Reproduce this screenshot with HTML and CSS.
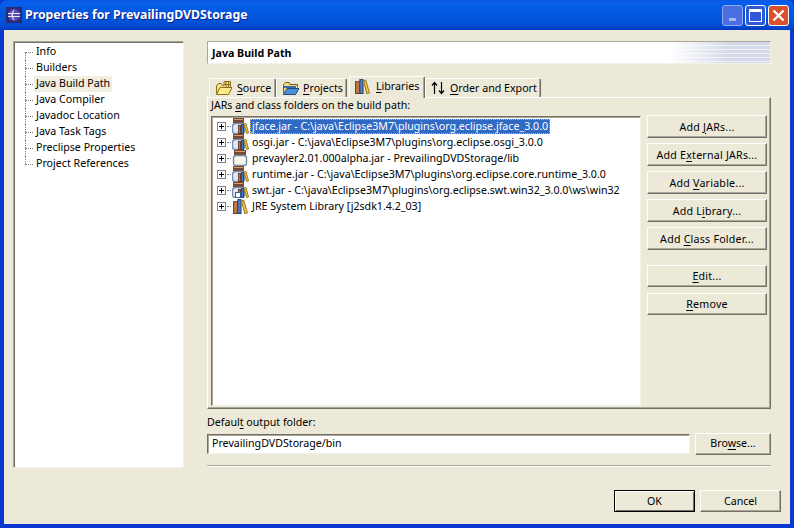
FILE: index.html
```html
<!DOCTYPE html>
<html lang="en">
<head>
<meta charset="utf-8">
<title>Properties for PrevailingDVDStorage</title>
<link rel="stylesheet" href="styles.css">
</head>
<body>
<svg class="defs" width="0" height="0" aria-hidden="true">
  <defs>
    <g id="books">
      <rect x="0.5" y="3.5" width="4" height="11" fill="#c07840" stroke="#6a4028"/>
      <rect x="4.5" y="1.5" width="3" height="13" fill="#5080c0" stroke="#2a4478"/>
      <path d="M8 2.5 L10 2 L13.5 14 L11 14.5 Z" fill="#f4c848" stroke="#a07c20" stroke-width="1"/>
    </g>
    <g id="jar">
      <rect x="2.5" y="0.5" width="11" height="2" fill="#d89a70" stroke="#7a4a30"/>
      <rect x="2.5" y="3.5" width="11" height="1" fill="#d89a70" stroke="#7a4a30"/>
      <rect x="1.5" y="5.5" width="13" height="10" rx="2.5" fill="#f6f6e4" stroke="#6f8db5" stroke-width="1.4"/>
    </g>
    <g id="jarbooks">
      <rect x="1.5" y="0.5" width="10" height="2" fill="#d89a70" stroke="#7a4a30"/>
      <rect x="1.5" y="3.5" width="10" height="1" fill="#d89a70" stroke="#7a4a30"/>
      <rect x="0.5" y="5.5" width="12" height="10" rx="2.5" fill="#dfe9f6" stroke="#6f8db5" stroke-width="1.4"/>
      <rect x="6.5" y="7.5" width="2" height="8" fill="#c07840" stroke="#6a4028"/>
      <rect x="9.5" y="6.5" width="2" height="9" fill="#5080c0" stroke="#2a4478"/>
      <path d="M12 6 L14 5.5 L16.5 15 L14.5 15.5 Z" fill="#f4c848" stroke="#a07c20"/>
    </g>
    <g id="folder-src">
      <path d="M1.5 13.5 L1.5 5.5 L3.5 3.5 L6.5 3.5 L7.5 5.5 L9 5.5 L9 1.5 L15.5 1.5 L15.5 7.5" fill="#f6dc80" stroke="#8a7020"/>
      <path d="M11 1.5 V7 M13.5 1.5 V7 M9 4.5 H15.5" stroke="#8a7020" fill="none"/>
      <path d="M1.5 14.5 L5 7.5 L17 7.5 L13.5 14.5 Z" fill="#fde88a" stroke="#8a7020"/>
    </g>
    <g id="folder-prj">
      <path d="M1.5 13.5 L1.5 4.5 L3.5 2.5 L7 2.5 L8 4.5 L15.5 4.5 L15.5 7.5" fill="#f6dc80" stroke="#6a6020"/>
      <path d="M2 7 H14" stroke="#3a6ab0" stroke-width="2"/>
      <path d="M1.5 14.5 L5 8.5 L17 8.5 L13.5 14.5 Z" fill="#4a90d8" stroke="#1f4a80"/>
    </g>
    <g id="plus">
      <rect x="0.5" y="0.5" width="8" height="8" fill="#fff" stroke="#808080"/>
      <path d="M2 4.5 H7 M4.5 2 V7" stroke="#000" fill="none"/>
    </g>
  </defs>
</svg>
<div class="window">
  <header class="titlebar">
    <svg class="appicon" width="16" height="16" viewBox="0 0 16 16">
      <rect width="16" height="16" fill="#2c2a78"/>
      <circle cx="8" cy="8" r="6" fill="#5a4ab0"/>
      <path d="M2 6.5 H14 M2 9.5 H14" stroke="#e8e8ff" stroke-width="1"/>
      <path d="M9 2.5 A6 6 0 0 0 9 13.5 A8 8 0 0 1 9 2.5 Z" fill="#e8e8ff"/>
    </svg>
    <span class="title">Properties for PrevailingDVDStorage</span>
    <div class="winbtns">
      <span class="winbtn winbtn-min"><i class="min-glyph"></i></span>
      <span class="winbtn winbtn-max"><i class="max-glyph"></i></span>
      <span class="winbtn winbtn-close">
        <svg width="13" height="13" viewBox="0 0 13 13"><path d="M1.5 1.5 L11.5 11.5 M11.5 1.5 L1.5 11.5" stroke="#fff" stroke-width="2.4"/></svg>
      </span>
    </div>
  </header>
  <div class="client">
    <div class="main">
      <nav class="nav">
        <ul class="navlist">
          <li class="navitem"><span>Info</span></li>
          <li class="navitem"><span>Builders</span></li>
          <li class="navitem navitem-sel"><span>Java Build Path</span></li>
          <li class="navitem"><span>Java Compiler</span></li>
          <li class="navitem"><span>Javadoc Location</span></li>
          <li class="navitem"><span>Java Task Tags</span></li>
          <li class="navitem"><span>Preclipse Properties</span></li>
          <li class="navitem"><span>Project References</span></li>
        </ul>
      </nav>
      <section class="page">
        <div class="pagehead">Java Build Path</div>
        <div class="tabs">
          <div class="tab tab-source"><svg class="tabicon" width="17" height="16" viewBox="0 0 17 16"><use href="#folder-src"/></svg><span><u>S</u>ource</span></div>
          <div class="tab tab-projects"><svg class="tabicon" width="17" height="16" viewBox="0 0 17 16"><use href="#folder-prj"/></svg><span><u>P</u>rojects</span></div>
          <div class="tab tab-active"><svg class="tabicon" width="15" height="16" viewBox="0 0 14 15"><use href="#books"/></svg><span><u>L</u>ibraries</span></div>
          <div class="tab tab-order"><svg class="tabicon" width="14" height="14" viewBox="0 0 14 14"><path d="M3.5 13 V2 M1 4.5 L3.5 1.5 L6 4.5 M10.5 1 V12 M8 9.5 L10.5 12.5 L13 9.5" stroke="#000" stroke-width="1.2" fill="none"/></svg><span><u>O</u>rder and Export</span></div>
        </div>
        <div class="panel">
          <div class="panellabel">JARs <u>a</u>nd class folders on the build path:</div>
          <div class="panelbody">
            <div class="list">
              <div class="row"><svg class="plus" width="9" height="9"><use href="#plus"/></svg><i class="dash"></i><svg class="ricon" width="17" height="16" viewBox="0 0 17 16"><use href="#jarbooks"/></svg><span class="rowtext rowtext-sel">jface.jar - C:\java\Eclipse3M7\plugins\org.eclipse.jface_3.0.0</span></div>
              <div class="row"><svg class="plus" width="9" height="9"><use href="#plus"/></svg><i class="dash"></i><svg class="ricon" width="17" height="16" viewBox="0 0 17 16"><use href="#jarbooks"/></svg><span class="rowtext">osgi.jar - C:\java\Eclipse3M7\plugins\org.eclipse.osgi_3.0.0</span></div>
              <div class="row"><svg class="plus" width="9" height="9"><use href="#plus"/></svg><i class="dash"></i><svg class="ricon" width="17" height="16" viewBox="0 0 17 16"><use href="#jar"/></svg><span class="rowtext">prevayler2.01.000alpha.jar - PrevailingDVDStorage/lib</span></div>
              <div class="row"><svg class="plus" width="9" height="9"><use href="#plus"/></svg><i class="dash"></i><svg class="ricon" width="17" height="16" viewBox="0 0 17 16"><use href="#jarbooks"/></svg><span class="rowtext">runtime.jar - C:\java\Eclipse3M7\plugins\org.eclipse.core.runtime_3.0.0</span></div>
              <div class="row"><svg class="plus" width="9" height="9"><use href="#plus"/></svg><i class="dash"></i><svg class="ricon" width="17" height="16" viewBox="0 0 17 16"><use href="#jarbooks"/><rect x="3.5" y="10.5" width="5" height="5" fill="#fff" stroke="#3a5a90"/></svg><span class="rowtext">swt.jar - C:\java\Eclipse3M7\plugins\org.eclipse.swt.win32_3.0.0\ws\win32</span></div>
              <div class="row"><svg class="plus" width="9" height="9"><use href="#plus"/></svg><i class="dash"></i><svg class="ricon" width="17" height="16" viewBox="0 0 14 15"><use href="#books"/></svg><span class="rowtext">JRE System Library [j2sdk1.4.2_03]</span></div>
            </div>
            <div class="btncol">
              <button class="btn btn-side">Add <u>J</u>ARs...</button>
              <button class="btn btn-side">Add E<u>x</u>ternal JARs...</button>
              <button class="btn btn-side">Add <u>V</u>ariable...</button>
              <button class="btn btn-side">Add L<u>i</u>brary...</button>
              <button class="btn btn-side">Add <u>C</u>lass Folder...</button>
              <button class="btn btn-side btn-short btn-gap"><u>E</u>dit...</button>
              <button class="btn btn-side btn-short btn-next"><u>R</u>emove</button>
            </div>
          </div>
        </div>
        <label class="outlabel">Defaul<u>t</u> output folder:</label>
        <div class="outrow">
          <div class="field">PrevailingDVDStorage/bin</div>
          <button class="btn btn-browse">Bro<u>w</u>se...</button>
        </div>
        <div class="sep"></div>
      </section>
    </div>
    <footer class="actions">
      <button class="btn btn-action btn-default">OK</button>
      <button class="btn btn-action">Cancel</button>
    </footer>
  </div>
</div>
</body>
</html>
```

FILE: styles.css
```css
* { box-sizing: border-box; }
html, body { margin: 0; padding: 0; }
body { width: 794px; height: 528px; overflow: hidden; font: 10.65px/13px "Noto Sans", "Liberation Sans", sans-serif; color: #000; }
.defs { position: absolute; }
u { text-decoration: underline; text-underline-offset: 2px; }

.window { width: 794px; height: 528px; display: flex; flex-direction: column; background: #0a38d0; padding: 0 4px 4px; }
.titlebar { height: 30px; margin: 0 -4px; padding: 0 5px 0 6px; display: flex; align-items: center; flex: none; border-radius: 7px 7px 0 0;
  background: linear-gradient(#0a58e0 0, #0a5cf0 2px, #0560e8 4px, #0358e0 12px, #0252d8 22px, #0348d0 27px, #0438c0 30px); }
.appicon { flex: none; margin-right: 3px; }
.title { color: #fff; font: bold 12.3px/16px "Noto Sans", "Liberation Sans", sans-serif; text-shadow: 1px 1px 0 #0f1f88; flex: 1; }
.winbtns { display: flex; gap: 2px; }
.winbtn { width: 21px; height: 21px; border: 1px solid #fff; border-radius: 3px; display: flex; align-items: center; justify-content: center; }
.winbtn-min { background: #4a6fe0; border-color: #8fa8ee; align-items: flex-end; padding-bottom: 4px; }
.winbtn-max { background: #2f58d8; }
.winbtn-close { background: #d8502c; }
.min-glyph { width: 7px; height: 3px; background: #a8b8ee; display: block; }
.max-glyph { width: 13px; height: 13px; border: 1px solid #fff; border-top-width: 3px; display: block; }

.client { flex: 1; background: #ece9d8; display: flex; flex-direction: column; padding: 11px 9px 12px; }
.main { display: flex; gap: 23px; flex: none; height: 427px; padding-right: 10px; }

.nav { width: 171px; flex: none; background: #fff; border: 1px solid; border-color: #aca899 #f5f3e8 #f5f3e8 #aca899; box-shadow: inset 1px 1px 0 #716f64; padding: 2px 0 0 11px; }
.navlist { list-style: none; margin: 0; padding: 0; }
.navitem { height: 16px; display: flex; align-items: center; position: relative; padding-left: 9px; }
.navitem::before { content: ""; position: absolute; left: 0; top: 8px; width: 8px; border-top: 1px dotted #808080; }
.navitem::after { content: ""; position: absolute; left: 0; top: 0; bottom: 0; border-left: 1px dotted #808080; }
.navitem:first-child::after { top: 8px; }
.navitem:last-child::after { bottom: 8px; }
.navitem span { padding: 0 2px; height: 16px; line-height: 15px; }
.navitem-sel span { background: #f1efe2; }

.page { flex: 1; min-width: 0; display: flex; flex-direction: column; }
.pagehead { height: 23px; flex: none; font-weight: bold; line-height: 22px; padding-left: 4px; border: 1px solid; border-color: #aca899 #f5f3e8 #f5f3e8 #aca899;
  background: linear-gradient(90deg, #fff 0, #fff 82%, rgba(255,255,255,0) 93%) padding-box, repeating-linear-gradient(#d3d9e8 0 3px, #eef0f6 3px 4px) padding-box; }

.tabs { display: flex; height: 21px; margin-top: 12px; padding-left: 2px; flex: none; align-items: flex-end; }
.tab { height: 19px; display: flex; align-items: center; padding: 0 0 0 5px; background: #ece9d8; border: 1px solid #fff; border-bottom: 0; border-right-color: #716f64; border-radius: 2px 2px 0 0; box-shadow: inset -1px 0 0 #aca899; flex: none; }
.tab-source { width: 67px; gap: 5px; }
.tab-projects { width: 71px; gap: 4px; }
.tab-active { width: 76px; gap: 6px; height: 22px; position: relative; z-index: 1; margin: 0 0 -1px 2px; padding-bottom: 3px; }
.tab-order { width: 116px; gap: 5px; }
.tabicon { flex: none; }

.panel { height: 312px; flex: none; border: 1px solid; border-color: #fff #716f64 #716f64 #fff; box-shadow: inset -1px -1px 0 #aca899; padding: 0 3px 2px 3px; display: flex; flex-direction: column; }
.panellabel { height: 18px; padding-top: 1px; line-height: 13px; flex: none; }
.panelbody { flex: 1; display: flex; gap: 6px; min-height: 0; }
.list { width: 430px; flex: none; background: #fff; border: 1px solid; border-color: #716f64 #f5f3e8 #f5f3e8 #716f64; box-shadow: inset 1px 1px 0 #aca899; padding: 1px 0 0 5px; overflow: hidden; }
.row { height: 16px; display: flex; align-items: center; white-space: nowrap; }
.plus { flex: none; }
.dash { width: 4px; margin: 0 1px; border-top: 1px dotted #808080; flex: none; }
.ricon { flex: none; margin-right: 1px; }
.rowtext { padding: 0 2px; line-height: 14px; height: 15px; }
.rowtext-sel { background: #316ac5; color: #fff; outline: 1px dotted #e8b838; outline-offset: -1px; }

.btn { font: inherit; color: #000; background: #ece9d8; border: 1px solid; border-color: #fff #716f64 #716f64 #fff; box-shadow: inset -1px -1px 0 #aca899; padding: 0; margin: 0; }
.btncol { flex: 1; display: flex; flex-direction: column; gap: 5px; margin-top: -1px; }
.btn-side { width: 120px; height: 23px; flex: none; padding-top: 1px; letter-spacing: 0.22px; }
.btn-short { height: 22px; }
.btn-gap { margin-top: 10px; }
.btn-next { margin-top: 1px; }

.outlabel { display: block; margin-top: 6px; height: 16px; line-height: 14px; flex: none; }
.outrow { display: flex; align-items: center; gap: 5px; height: 22px; flex: none; margin-top: 2px; }
.field { width: 483px; height: 20px; background: #fff; line-height: 17px; padding-left: 4px; border: 1px solid; border-color: #716f64 #f5f3e8 #f5f3e8 #716f64; box-shadow: inset 1px 1px 0 #aca899; }
.btn-browse { width: 76px; height: 22px; padding-bottom: 2px; }
.sep { height: 2px; margin-top: 10px; border-top: 1px solid #aca899; border-bottom: 1px solid #fff; flex: none; }

.actions { display: flex; justify-content: flex-end; gap: 5px; margin-top: auto; }
.btn-action { width: 81px; height: 22px; }
.btn-default { outline: 1px solid #000; outline-offset: -1px; border-color: #000; box-shadow: inset 1px 1px 0 #fff, inset -1px -1px 0 #716f64; }
```
